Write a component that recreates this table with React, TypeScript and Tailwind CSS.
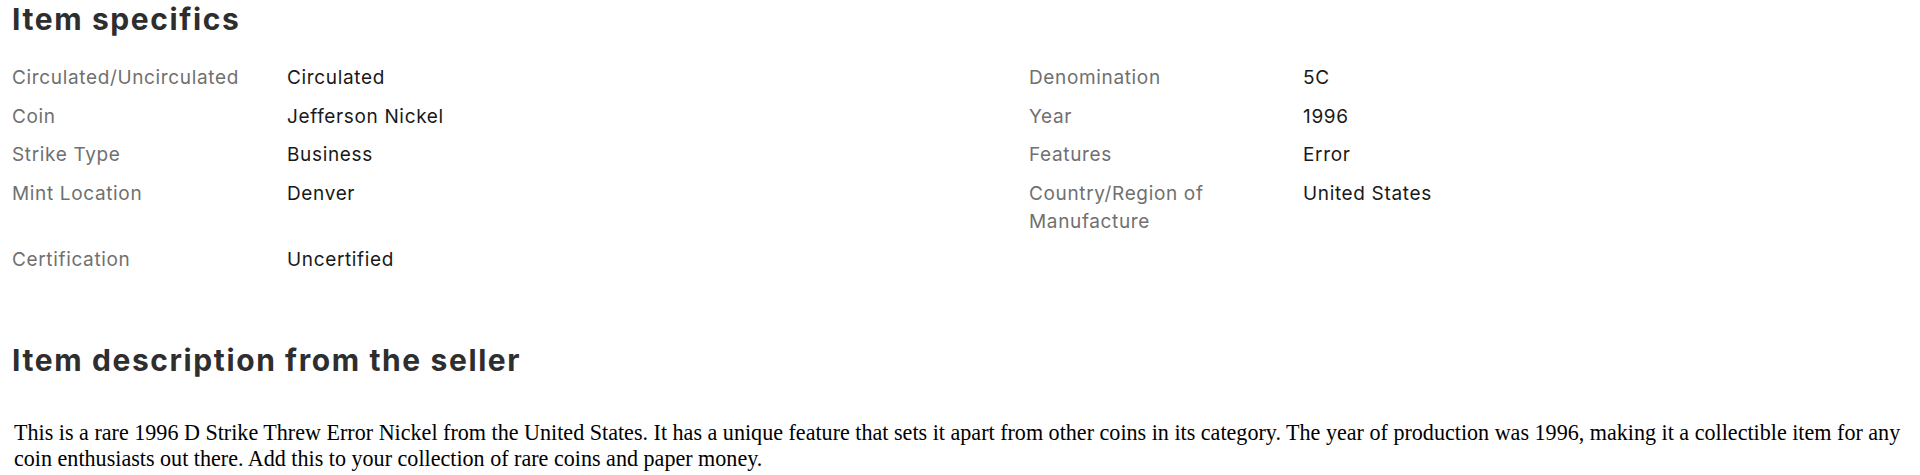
import React from "react";

const rows: [string, string, string?, string?][] = [
  ["Circulated/Uncirculated", "Circulated", "Denomination", "5C"],
  ["Coin", "Jefferson Nickel", "Year", "1996"],
  ["Strike Type", "Business", "Features", "Error"],
  ["Mint Location", "Denver", "Country/Region of Manufacture", "United States"],
  ["Certification", "Uncertified"],
];

export default function App() {
  return (
    <div className="bg-white w-[1920px] h-[475px] overflow-hidden pl-[12px] pr-[4px]">
      <div className="font-['Inter',sans-serif]">
        <h2 className="text-[30px] leading-[38px] font-bold text-[#2e2e2e] tracking-[1.6px]">
          Item specifics
        </h2>
        <div className="mt-[26px] grid grid-cols-[275px_742px_274px_1fr] gap-y-[10.5px] text-[19px] leading-[28px] tracking-[0.65px]">
          {rows.map(([l1, v1, l2, v2]) => (
            <React.Fragment key={l1}>
              <div className="pr-[24px] text-[#707070]">{l1}</div>
              <div className="text-[#191919]">{v1}</div>
              <div className="pr-[24px] text-[#707070]">{l2 ?? ""}</div>
              <div className="text-[#191919]">{v2 ?? ""}</div>
            </React.Fragment>
          ))}
        </div>
        <h2 className="mt-[67px] text-[30px] leading-[38px] font-bold text-[#2e2e2e] tracking-[1.6px]">
          Item description from the seller
        </h2>
      </div>
      <p className="mt-[41px] ml-[2px] font-['Liberation_Serif',serif] text-[22.1px] leading-[26px] text-black">
        This is a rare 1996 D Strike Threw Error Nickel from the United States. It has a unique feature that sets it apart from other coins in its category. The year of production was 1996, making it a collectible item for any coin enthusiasts out there. Add this to your collection of rare coins and paper money.
      </p>
    </div>
  );
}
